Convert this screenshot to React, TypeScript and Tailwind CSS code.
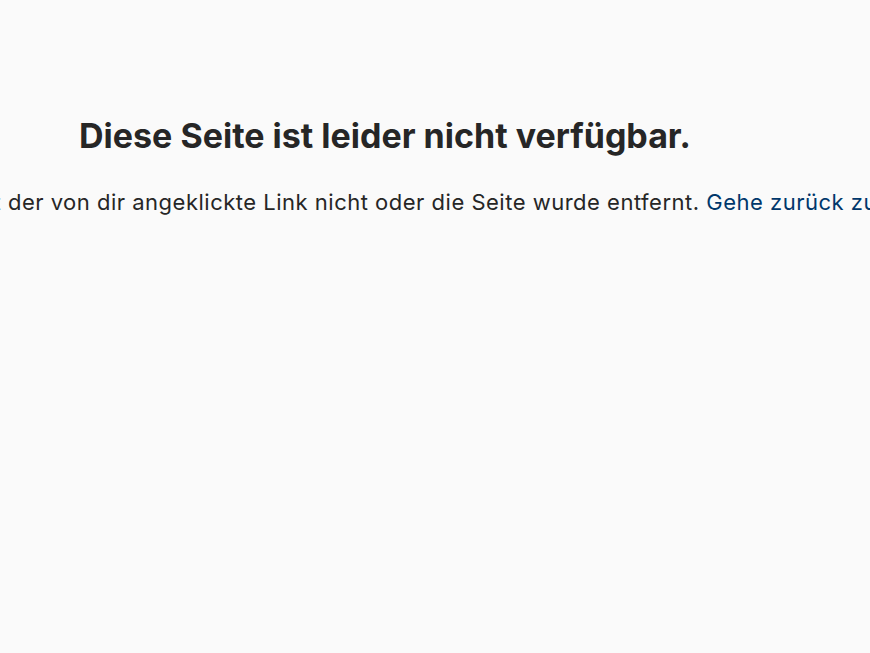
const App = () => {
  return (
    <div className="min-h-[653px] w-full overflow-hidden bg-[#fafafa] text-[#262626] font-['Inter',Arial,sans-serif]">
      <div className="flex w-[770px] flex-col items-center pt-[116px]">
        <h2 className="whitespace-nowrap text-[34px] font-bold leading-[40px]">
          Diese Seite ist leider nicht verfügbar.
        </h2>
        <div className="mt-[34px] flex w-full justify-center pl-[30px]">
          <p className="shrink-0 whitespace-nowrap text-[22px] leading-[24px] tracking-[0.5px]">
            Leider funktioniert der von dir angeklickte Link nicht oder die Seite wurde entfernt.{' '}
            <a href="#" className="text-[#00376b]">
              Gehe zurück zu Instagram.
            </a>
          </p>
        </div>
      </div>
    </div>
  );
};

export default App;
